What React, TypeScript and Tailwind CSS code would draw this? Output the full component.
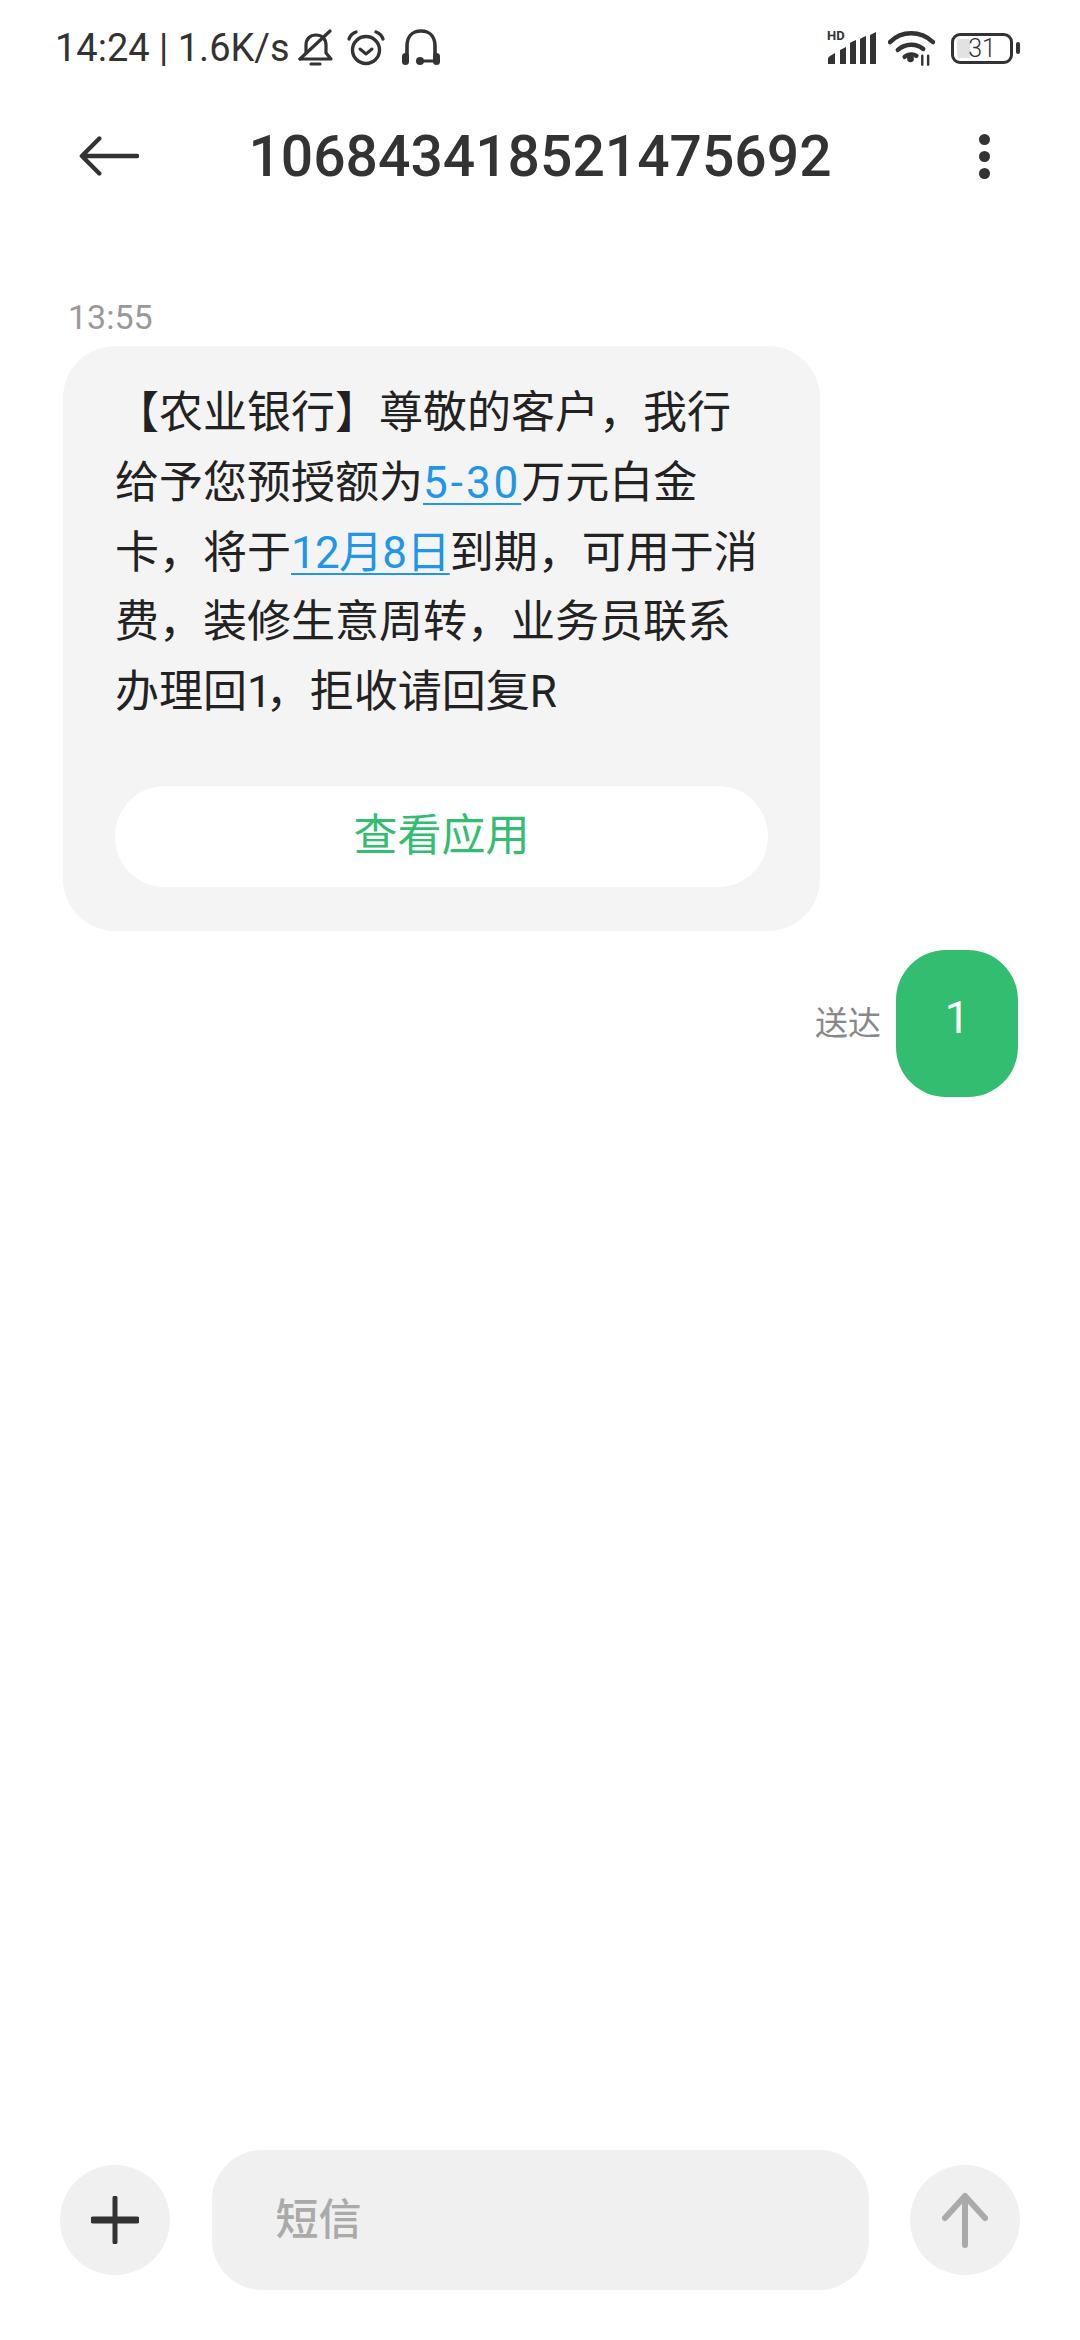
export default function App() {
  return (
    <div className="flex h-[2340px] w-[1080px] flex-col overflow-hidden bg-white font-['Roboto','Noto_Sans_CJK_SC',sans-serif] text-[#333]">
      <StatusBar />
      <header className="grid h-[120px] grid-cols-[1fr_auto_1fr] items-center px-[90px]">
        <svg className="-ml-[11px]" width="60" height="42" viewBox="0 0 62 42" fill="none" stroke="#333" strokeWidth="4.5" strokeLinecap="round" strokeLinejoin="round">
          <path d="M60 21H4M21 3 3 21l18 18" />
        </svg>
        <h1 className="text-[57px] leading-none font-medium">106843418521475692</h1>
        <div className="flex flex-col gap-[6px] justify-self-end">
          <span className="h-[11px] w-[11px] rounded-full bg-[#333]" />
          <span className="h-[11px] w-[11px] rounded-full bg-[#333]" />
          <span className="h-[11px] w-[11px] rounded-full bg-[#333]" />
        </div>
      </header>

      <main className="flex-1 pt-[81px]">
        <div className="pl-[68px] text-[34px] leading-[40px] text-[#999]">13:55</div>
        <div className="mt-[9px] ml-[63px] w-[757px] rounded-[52px] bg-[#f4f4f4] pt-[33px] pr-[52px] pb-[44px] pl-[52px]">
          <p className="text-[44px] leading-[69.8px] whitespace-nowrap text-[#222]">
            【农业银行】尊敬的客户，我行
            <br />
            给予您预授额为
            <a className="tracking-[3px] text-[#2196e8] underline decoration-2 underline-offset-[5px]">5-30</a>
            万元白金
            <br />
            卡，将于
            <a className="tracking-[-0.7px] text-[#2196e8] underline decoration-2 underline-offset-[5px]">12月8日</a>
            到期，可用于消
            <br />
            费，装修生意周转，业务员联系
            <br />
            办理回<span className="tracking-[-6px]">1</span>，拒收请回复R
          </p>
          <button className="mt-[58px] flex h-[101px] w-full items-center justify-center rounded-[50px] bg-white text-[44px] text-[#33bd70]">
            查看应用
          </button>
        </div>

        <div className="mt-[19px] flex items-center justify-end gap-[15px] pr-[62px]">
          <span className="text-[33px] text-[#888]">送达</span>
          <div className="flex h-[147px] w-[122px] items-center justify-center rounded-[50px] bg-[#33bd70] pb-[11px] text-[44px] text-white">
            1
          </div>
        </div>
      </main>

      <footer className="flex items-center justify-between pr-[60px] pb-[50px] pl-[60px]">
        <button className="flex h-[110px] w-[110px] items-center justify-center rounded-full bg-[#f0f0f0]">
          <svg width="48" height="48" viewBox="0 0 48 48" fill="none" stroke="#333" strokeLinecap="round">
            <path d="M2 24h44" strokeWidth="7" />
            <path d="M24 2v44" strokeWidth="5" />
          </svg>
        </button>
        <div className="flex h-[140px] w-[657px] items-center rounded-[50px] bg-[#f0f0f0] pl-[64px] text-[43px] font-medium text-[#aaa]">
          短信
        </div>
        <button className="flex h-[110px] w-[110px] items-center justify-center rounded-full bg-[#f0f0f0]">
          <svg width="46" height="56" viewBox="0 0 46 56" fill="none" stroke="#aaa" strokeWidth="6" strokeLinecap="round" strokeLinejoin="round">
            <path d="M23 53V4M3 26 23 4l20 22" />
          </svg>
        </button>
      </footer>
    </div>
  );
}

function StatusBar() {
  return (
    <div className="flex h-[96px] items-center justify-between pr-[60px] pl-[55px]">
      <div className="flex items-center">
        <span className="text-[38px] leading-none whitespace-nowrap">14:24 | 1.6K/s</span>
        <svg className="ml-[8px]" width="36" height="38" viewBox="0 0 36 38" fill="none" stroke="#333" strokeWidth="3.2" strokeLinecap="round" strokeLinejoin="round">
          <path d="M2 30h31l-5-6V16c0-6-4-10-10-10S8 10 8 16v8" />
          <path d="M2 30 32 2M13 35h9" />
        </svg>
        <svg className="ml-[12px]" width="40" height="38" viewBox="0 0 40 38" fill="none" stroke="#333" strokeLinecap="round" strokeLinejoin="round">
          <circle cx="20" cy="21" r="13.5" strokeWidth="3.4" />
          <path d="m14 20 6 5 6-5" strokeWidth="3" />
          <path d="M3 10c1-3 4-6 7-7M37 10c-1-3-4-6-7-7" strokeWidth="3.4" />
        </svg>
        <svg className="ml-[15px]" width="40" height="38" viewBox="0 0 40 38" fill="none" stroke="#333" strokeLinecap="round">
          <path d="M6 28V17C6 8 11 2 20 2s14 6 14 15v11" strokeWidth="3.6" />
          <path d="M20 32h14" strokeWidth="3" />
          <rect x="1" y="24" width="7" height="12" rx="3.5" fill="#333" stroke="none" />
          <rect x="32" y="24" width="7" height="12" rx="3.5" fill="#333" stroke="none" />
          <circle cx="19" cy="32" r="4" fill="#333" stroke="none" />
        </svg>
      </div>
      <div className="flex items-center">
        <div className="relative h-[34px] w-[50px]">
          <span className="absolute top-[-2px] left-0 text-[13px] leading-none font-bold">HD</span>
          <svg className="absolute inset-0" width="50" height="34" viewBox="0 0 50 34" fill="#333">
            <path d="M2 33v-5q0-2 2-3l5-3v11zM14 33V19l6-3v17zM24 33V12q3-2 6-3v24zM34 33V8q3-2 6-3v28zM44 33V4l6-3v32z" transform="translate(-1 0)" />
          </svg>
        </div>
        <svg className="ml-[11px]" width="47" height="36" viewBox="0 0 48 36" fill="none" stroke="#333" strokeWidth="4.5" strokeLinecap="round">
          <path d="M2 12C14 0 33 0 46 12" />
          <path d="M10 20c8-7 19-7 26-1" />
          <path d="M17 27c4-3 9-3 12-1" />
          <path d="M23 29v0" strokeWidth="7" />
          <path d="M35 26v9M41 26v9" strokeWidth="2.5" />
        </svg>
        <div className="ml-[16px] flex h-[31px] w-[62px] items-center justify-center rounded-[9px] border-[3px] border-[#333] bg-[linear-gradient(to_right,#e2e2e2_28%,transparent_28%)] bg-clip-content p-[3px] text-[25px] leading-none font-light">
          31
        </div>
        <span className="ml-[3px] h-[12px] w-[4px] rounded-[2px] bg-[#333]" />
      </div>
    </div>
  );
}
